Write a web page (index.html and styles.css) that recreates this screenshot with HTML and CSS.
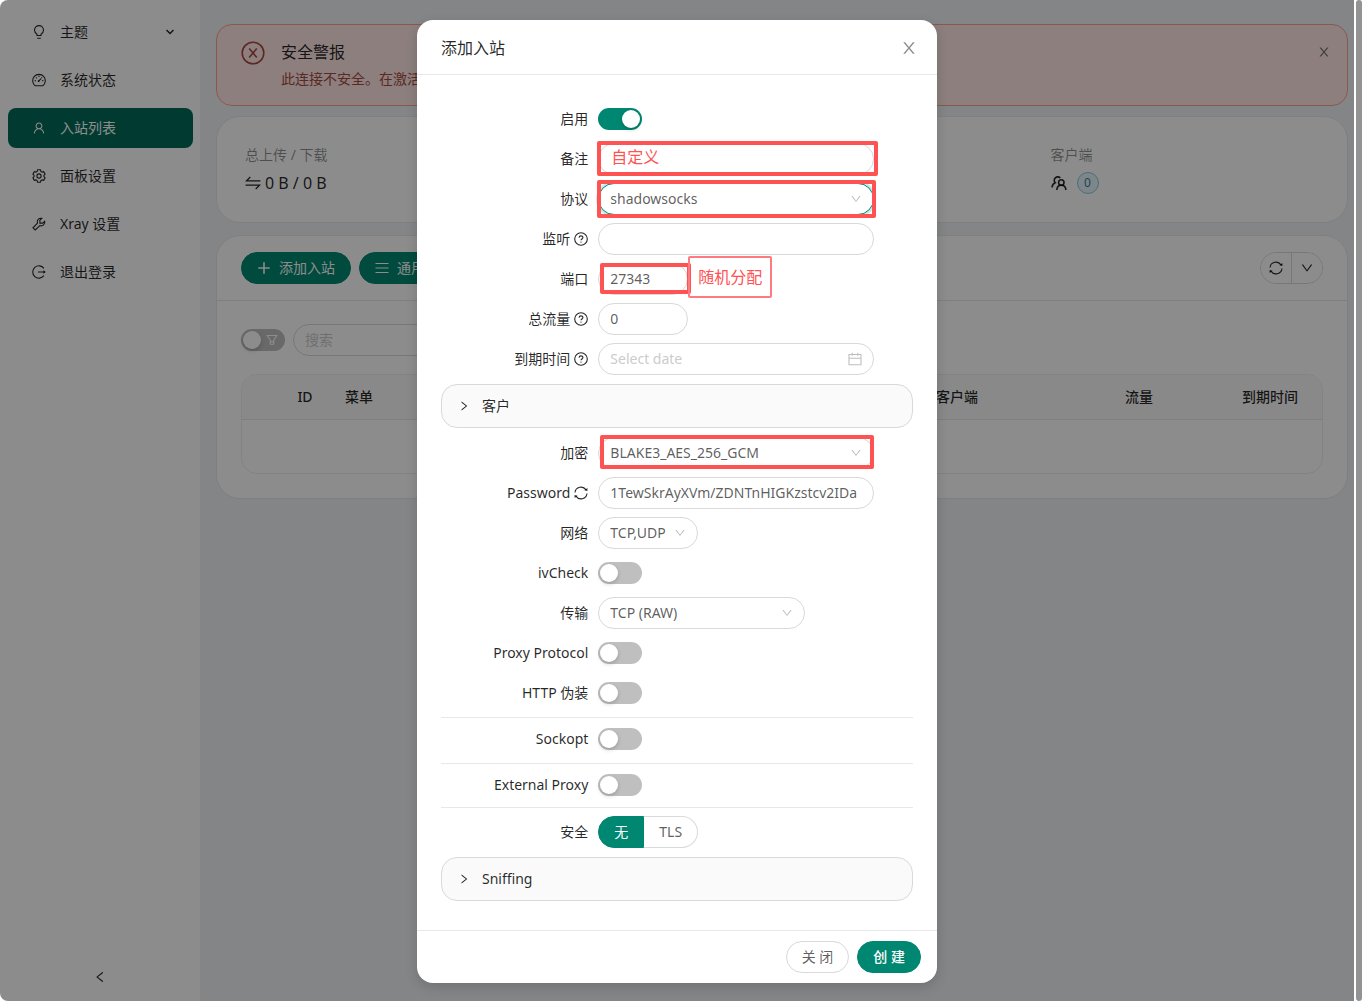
FILE: index.html
```html
<!DOCTYPE html>
<html lang="zh-CN">
<head>
    <meta charset="UTF-8">
    <meta name="viewport" content="width=device-width, initial-scale=1.0">
    <title>入站列表</title>
    <link rel="stylesheet" href="styles.css">
</head>
<body>
    <svg class="sprite" aria-hidden="true">
        <symbol id="i-close" viewBox="0 0 1024 1024"><path d="M563.8 512l262.5-312.9c4.4-5.2.7-13.1-6.1-13.1h-79.8c-4.7 0-9.2 2.1-12.3 5.7L511.6 449.8 295.1 191.7c-3-3.6-7.5-5.7-12.3-5.7H203c-6.8 0-10.5 7.9-6.1 13.1L459.4 512 196.9 824.9A7.95 7.95 0 0 0 203 838h79.8c4.7 0 9.2-2.1 12.3-5.7l216.5-258.1 216.5 258.1c3 3.6 7.5 5.7 12.3 5.7h79.8c6.8 0 10.5-7.9 6.1-13.1L563.8 512z"/></symbol>
        <symbol id="i-down" viewBox="0 0 1024 1024"><path d="M884 256h-75c-5.1 0-9.9 2.5-12.9 6.6L512 654.2 227.9 262.6c-3-4.1-7.8-6.6-12.9-6.6h-75c-6.5 0-10.3 7.4-6.5 12.7l352.6 486.1c12.8 17.6 39 17.6 51.7 0l352.6-486.1c3.9-5.3.1-12.7-6.4-12.7z"/></symbol>
        <symbol id="i-right" viewBox="0 0 1024 1024"><path d="M765.7 486.8L314.9 134.7A7.97 7.97 0 0 0 302 141v77.3c0 4.9 2.3 9.6 6.1 12.6l360 281.1-360 281.1c-3.9 3-6.1 7.7-6.1 12.6V883c0 6.7 7.7 10.4 12.9 6.3l450.8-352.1a31.96 31.96 0 0 0 0-50.4z"/></symbol>
        <symbol id="i-user" viewBox="0 0 1024 1024"><path d="M858.5 763.6a374 374 0 0 0-80.6-119.5 375.63 375.63 0 0 0-119.5-80.6c-.4-.2-.8-.3-1.2-.5C719.5 518 760 444.7 760 362c0-137-111-248-248-248S264 225 264 362c0 82.7 40.5 156 102.8 201.1-.4.2-.8.3-1.2.5-44.8 18.9-85 46-119.5 80.6a375.63 375.63 0 0 0-80.6 119.5A371.7 371.7 0 0 0 136 901.8a8 8 0 0 0 8 8.2h60c4.4 0 7.9-3.5 8-7.8 2-77.2 33-149.5 87.8-204.3 56.7-56.7 132-87.9 212.2-87.9s155.5 31.2 212.2 87.9C779 752.7 810 825 812 902.2c.1 4.4 3.6 7.8 8 7.8h60a8 8 0 0 0 8-8.2c-1-47.8-10.9-94.3-29.5-138.2zM512 534c-45.9 0-89.1-17.9-121.6-50.4S340 407.9 340 362c0-45.9 17.9-89.1 50.4-121.6S466.1 190 512 190s89.1 17.9 121.6 50.4S684 316.1 684 362c0 45.9-17.9 89.1-50.4 121.6S557.9 534 512 534z"/></symbol>
        <symbol id="i-bulb" viewBox="0 0 14 14"><path class="ln" d="M5 10.5V9.200C3.600 8.400 2.500 7 2.500 5.100a4.500 4.500 0 0 1 9 0c0 1.900-1.100 3.300-2.500 4.100v1.300zM5.200 13.200h3.600"/></symbol>
        <symbol id="i-dashboard" viewBox="0 0 14 14"><path class="ln" d="M3.200 12.700A6.300 6.300 0 1 1 10.800 12.700zM6.600 8.200l2.500-2.600M7 2.800v1.200M2.700 7.600h1.200M10.200 7.600h1.200M4 4.500l.8.8M10 4.500l-.6.6"/><circle cx="6.600" cy="8.200" r=".9"/></symbol>
        <symbol id="i-setting" viewBox="0 0 14 14"><path class="ln" d="M5.600.8h2.800l.5 1.700 1.100.6 1.700-.4 1.400 2.400-1.200 1.300v1.200l1.200 1.300-1.400 2.400-1.700-.4-1.100.6-.5 1.700H5.600l-.5-1.700-1.100-.6-1.700.4L.9 8.900l1.200-1.300V6.400L.9 5.100l1.400-2.400 1.700.4 1.100-.6z"/><circle class="ln" cx="7" cy="7" r="2.100"/></symbol>
        <symbol id="i-tool" viewBox="0 0 14 14"><path class="ln" d="M9.800 1.300 7.900 3.200v2.900h2.900l1.900-1.900a3.700 3.700 0 0 1-4.800 4.400L3.200 13 1 10.800l4.500-4.600a3.700 3.700 0 0 1 4.300-4.900z"/></symbol>
        <symbol id="i-logout" viewBox="0 0 14 14"><path class="ln" d="M11.900 3.300a6.200 6.200 0 1 0 0 7.400M6 7h6.500"/><path d="M11.400 5.200v3.600L13.800 7z"/></symbol>
        <symbol id="i-error" viewBox="0 0 24 24"><path class="ln2" d="M12 1.200a10.800 10.800 0 1 0 0 21.600 10.800 10.800 0 0 0 0-21.600zM8.200 7.500l7.600 9M15.800 7.500l-7.600 9"/></symbol>
        <symbol id="i-swap" viewBox="0 0 14 14"><path class="ln" d="M13.500 5.200H1.200l3.400-3.400M.5 8.800h12.300l-3.400 3.400"/></symbol>
        <symbol id="i-team" viewBox="0 0 16 16"><path class="ln2" d="M1 12.500c.2-2.300 1.400-4 3.200-4.700A3.100 3.100 0 1 1 9.300 3M5.800 15c.2-3 2-4.700 4.500-4.700s4.400 1.700 4.600 4.700"/><circle class="ln2" cx="10.300" cy="7.500" r="2.700"/></symbol>
        <symbol id="i-plus" viewBox="0 0 14 14"><path class="ln2" d="M7 1.300v11.400M1.300 7h11.400"/></symbol>
        <symbol id="i-menu" viewBox="0 0 14 14"><path class="ln" d="M.5 2.500h13M.5 7h13M.5 11.500h13"/></symbol>
        <symbol id="i-filter" viewBox="0 0 12 12"><path class="ln" d="M1.200 1.500h9.600L7.700 6.300v4H4.300v-4zM4.300 7.700h3.400"/></symbol>
        <symbol id="i-sync" viewBox="0 0 14 14"><path class="ln" d="M1 6.500a6 6 0 0 1 11-2.600M13 7.500a6 6 0 0 1-11 2.600"/><path d="M13.400 1.900v3l-3-.6zM.6 12.100v-3l3 .6z"/></symbol>
        <symbol id="i-question" viewBox="0 0 14 14"><circle class="ln" cx="7" cy="7" r="6.300"/><path class="ln" d="M5.100 5.700c0-2.500 3.800-2.400 3.800-.1 0 1.300-1.900 1.500-1.900 2.700"/><circle cx="7" cy="10.100" r=".7"/></symbol>
        <symbol id="i-calendar" viewBox="0 0 14 14"><path class="ln" d="M1 2.500h12v10.200H1zM1 6.200h12M4.200.8v3M9.800.8v3"/></symbol>
    </svg>

    <div class="window">
        <div class="app">
            <aside class="sidebar">
                <nav class="menu">
                    <a href="#"><svg class="icon"><use href="#i-bulb"/></svg>主题<svg class="icon caret" viewBox="0 0 10 10"><path d="M1.500 3 5 6.500 8.500 3" fill="none" stroke="currentColor" stroke-width="1.500"/></svg></a>
                    <a href="#"><svg class="icon"><use href="#i-dashboard"/></svg>系统状态</a>
                    <a href="#" class="active"><svg class="icon"><use href="#i-user"/></svg>入站列表</a>
                    <a href="#"><svg class="icon"><use href="#i-setting"/></svg>面板设置</a>
                    <a href="#"><svg class="icon"><use href="#i-tool"/></svg>Xray 设置</a>
                    <a href="#"><svg class="icon"><use href="#i-logout"/></svg>退出登录</a>
                </nav>
                <button class="collapse-menu" type="button" aria-label="收起菜单"><svg class="icon flip"><use href="#i-right"/></svg></button>
            </aside>

            <main class="content">
                <div class="alert">
                    <svg class="alert-icon"><use href="#i-error"/></svg>
                    <div class="alert-text">
                        <h2>安全警报</h2>
                        <p>此连接不安全。在激活</p>
                    </div>
                    <button class="plain" type="button" aria-label="关闭警报"><svg class="icon"><use href="#i-close"/></svg></button>
                </div>

                <section class="card stats">
                    <div class="stat">
                        <div class="stat-title">总上传 / 下载</div>
                        <div class="stat-value"><svg class="icon large"><use href="#i-swap"/></svg>0 B / 0 B</div>
                    </div>
                    <div class="stat last">
                        <div class="stat-title">客户端</div>
                        <div class="stat-value"><svg class="icon large"><use href="#i-team"/></svg><span class="tag">0</span></div>
                    </div>
                </section>

                <section class="card">
                    <div class="toolbar">
                        <button class="btn primary" type="button"><svg class="icon"><use href="#i-plus"/></svg>添加入站</button>
                        <button class="btn primary" type="button"><svg class="icon"><use href="#i-menu"/></svg>通用操作</button>
                        <div class="btn-group">
                            <button type="button" aria-label="刷新"><svg class="icon"><use href="#i-sync"/></svg></button>
                            <button type="button" aria-label="更多"><svg class="icon"><use href="#i-down"/></svg></button>
                        </div>
                    </div>
                    <div class="card-body">
                        <div class="filters">
                            <label class="filter-switch">
                                <input type="checkbox" class="switch" aria-label="筛选">
                                <svg><use href="#i-filter"/></svg>
                            </label>
                            <input type="text" class="field search" placeholder="搜索" aria-label="搜索">
                        </div>
                        <div class="table-box">
                            <table>
                                <thead>
                                    <tr>
                                        <th class="c-expand"></th>
                                        <th class="c-id">ID</th>
                                        <th class="c-menu">菜单</th>
                                        <th></th>
                                        <th class="c-client">客户端</th>
                                        <th class="c-traffic">流量</th>
                                        <th class="c-expiry">到期时间</th>
                                    </tr>
                                </thead>
                                <tbody>
                                    <tr><td colspan="7"></td></tr>
                                </tbody>
                            </table>
                        </div>
                    </div>
                </section>
            </main>

            <div class="mask">
                <form class="modal" role="dialog" aria-labelledby="modal-title">
                    <header class="modal-header">
                        <h1 id="modal-title">添加入站</h1>
                        <button class="plain" type="button" aria-label="关闭"><svg class="icon"><use href="#i-close"/></svg></button>
                    </header>

                    <div class="modal-body">
                        <div class="row">
                            <label for="enable">启用</label>
                            <div class="control"><input type="checkbox" class="switch" id="enable" checked></div>
                        </div>
                        <div class="row">
                            <label for="remark">备注</label>
                            <div class="control">
                                <input type="text" class="field" id="remark">
                                <span class="mark mark-remark">自定义</span>
                            </div>
                        </div>
                        <div class="row">
                            <label for="protocol">协议</label>
                            <div class="control">
                                <select class="field focused" id="protocol"><option>shadowsocks</option></select>
                                <svg class="suffix"><use href="#i-down"/></svg>
                                <span class="mark mark-protocol"></span>
                            </div>
                        </div>
                        <div class="row">
                            <label for="listen">监听 <svg class="icon"><use href="#i-question"/></svg></label>
                            <div class="control"><input type="text" class="field" id="listen"></div>
                        </div>
                        <div class="row">
                            <label for="port">端口</label>
                            <div class="control short">
                                <input type="text" class="field" id="port" value="27343">
                                <span class="mark mark-port"></span>
                                <span class="mark-note">随机分配</span>
                            </div>
                        </div>
                        <div class="row">
                            <label for="total">总流量 <svg class="icon"><use href="#i-question"/></svg></label>
                            <div class="control short"><input type="text" class="field" id="total" value="0"></div>
                        </div>
                        <div class="row">
                            <label for="expiry">到期时间 <svg class="icon"><use href="#i-question"/></svg></label>
                            <div class="control">
                                <input type="text" class="field" id="expiry" placeholder="Select date">
                                <svg class="suffix calendar"><use href="#i-calendar"/></svg>
                            </div>
                        </div>

                        <button class="panel" type="button"><svg class="icon small"><use href="#i-right"/></svg>客户</button>

                        <div class="row">
                            <label for="method">加密</label>
                            <div class="control">
                                <select class="field" id="method"><option>BLAKE3_AES_256_GCM</option></select>
                                <svg class="suffix"><use href="#i-down"/></svg>
                                <span class="mark mark-method"></span>
                            </div>
                        </div>
                        <div class="row">
                            <label for="password">Password <svg class="icon"><use href="#i-sync"/></svg></label>
                            <div class="control"><input type="text" class="field" id="password" value="1TewSkrAyXVm/ZDNTnHIGKzstcv2IDa"></div>
                        </div>
                        <div class="row">
                            <label for="network">网络</label>
                            <div class="control network">
                                <select class="field" id="network"><option>TCP,UDP</option></select>
                                <svg class="suffix"><use href="#i-down"/></svg>
                            </div>
                        </div>
                        <div class="row">
                            <label for="ivcheck">ivCheck</label>
                            <div class="control"><input type="checkbox" class="switch" id="ivcheck"></div>
                        </div>
                        <div class="row">
                            <label for="transport">传输</label>
                            <div class="control transport">
                                <select class="field" id="transport"><option>TCP (RAW)</option></select>
                                <svg class="suffix"><use href="#i-down"/></svg>
                            </div>
                        </div>
                        <div class="row">
                            <label for="proxy-protocol">Proxy Protocol</label>
                            <div class="control"><input type="checkbox" class="switch" id="proxy-protocol"></div>
                        </div>
                        <div class="row">
                            <label for="http-mask">HTTP 伪装</label>
                            <div class="control"><input type="checkbox" class="switch" id="http-mask"></div>
                        </div>

                        <div class="row divided sockopt">
                            <label for="sockopt">Sockopt</label>
                            <div class="control"><input type="checkbox" class="switch" id="sockopt"></div>
                        </div>
                        <div class="row divided">
                            <label for="external-proxy">External Proxy</label>
                            <div class="control"><input type="checkbox" class="switch" id="external-proxy"></div>
                        </div>
                        <div class="row divided security">
                            <span class="row-label" id="security-label">安全</span>
                            <div class="radio-group" role="radiogroup" aria-labelledby="security-label">
                                <label><input type="radio" name="security" checked><span>无</span></label>
                                <label><input type="radio" name="security"><span>TLS</span></label>
                            </div>
                        </div>

                        <button class="panel" type="button"><svg class="icon small"><use href="#i-right"/></svg>Sniffing</button>
                    </div>

                    <footer class="modal-footer">
                        <button class="btn" type="button">关 闭</button>
                        <button class="btn primary strong" type="submit">创 建</button>
                    </footer>
                </form>
            </div>
        </div>
        <div class="scrollbar"></div>
    </div>
</body>
</html>
```
FILE: styles.css
```css
:root {
    --primary: #008771;
    --border: #d9d9d9;
    --split: #e8e8e8;
    --text: rgba(0, 0, 0, 0.85);
    --text-light: rgba(0, 0, 0, 0.65);
    --mark: #ff5252;
}

* {
    box-sizing: border-box;
    margin: 0;
    padding: 0;
}

body {
    background: white;
    color: var(--text-light);
    font-family: "Noto Sans", "Noto Sans CJK SC", sans-serif;
    font-size: 14px;
    line-height: 22px;
}

button,
input,
select {
    font: inherit;
    color: inherit;
}

button {
    cursor: pointer;
}

.sprite {
    position: absolute;
    width: 0;
    height: 0;
}

.ln,
.ln2 {
    fill: none;
    stroke: currentColor;
    stroke-width: 1.1;
}

.ln2 {
    stroke-width: 1.6;
}

.icon {
    width: 14px;
    height: 14px;
    flex: none;
    fill: currentColor;
}

.icon.small {
    width: 12px;
    height: 12px;
}

.icon.large {
    width: 16px;
    height: 16px;
}

.flip {
    transform: scaleX(-1);
}

.plain {
    display: flex;
    border: none;
    background: none;
    color: rgba(0, 0, 0, 0.45);
}

.window {
    display: flex;
    min-height: 100vh;
}

.app {
    position: relative;
    display: flex;
    flex: 1;
    min-width: 0;
    overflow: hidden;
    border-radius: 8px 0 0 8px;
    background: #f0f2f5;
}

.scrollbar {
    width: 6px;
    margin: 0 2px;
    border-radius: 3px;
    background: #939393;
}

/* Sidebar */
.sidebar {
    display: flex;
    flex-direction: column;
    justify-content: space-between;
    width: 200px;
    flex: none;
    background: white;
}

.menu {
    display: flex;
    flex-direction: column;
    gap: 8px;
    padding: 12px 7px 12px 8px;
}

.menu a {
    display: flex;
    align-items: center;
    gap: 14px;
    height: 40px;
    padding: 0 18px 0 24px;
    border-radius: 8px;
    color: var(--text);
    text-decoration: none;
}

.menu .active {
    background: #006b58;
    color: white;
}

.menu .caret {
    width: 10px;
    height: 10px;
    margin-left: auto;
}

.collapse-menu {
    display: flex;
    align-items: center;
    justify-content: center;
    height: 48px;
    border: none;
    background: none;
    color: var(--text);
}

/* Content */
.content {
    flex: 1;
    min-width: 0;
    padding: 24px 6px 24px 16px;
}

.alert {
    display: flex;
    align-items: flex-start;
    gap: 16px;
    height: 82px;
    margin-bottom: 10px;
    padding: 15px 16px 16px 24px;
    border: 1px solid #ffa08c;
    border-radius: 16px;
    background: #ffe8e6;
    color: #a84a40;
}

.alert-icon {
    width: 24px;
    height: 26px;
    flex: none;
}

.alert-text {
    flex: 1;
}

.alert h2 {
    color: var(--text);
    font-size: 16px;
    font-weight: 400;
    line-height: 24px;
}

.alert p {
    padding-top: 4px;
}

.alert .plain {
    padding-top: 5px;
    color: rgba(0, 0, 0, 0.55);
}

.card {
    margin-bottom: 12px;
    border: 1px solid var(--split);
    border-radius: 24px;
    background: white;
}

.stats {
    display: grid;
    grid-template-columns: repeat(4, 1fr);
    padding: 27px 28px 25px;
}

.stats .last {
    grid-column: 4;
}

.stat-title {
    margin-bottom: 3px;
    color: rgba(0, 0, 0, 0.45);
}

.stat-value {
    display: flex;
    align-items: center;
    gap: 4px;
    height: 28px;
    color: var(--text);
    font-size: 16px;
}

.tag {
    min-width: 22px;
    margin-left: 6px;
    border: 1px solid #87c9e0;
    border-radius: 11px;
    background: #e8f5fa;
    color: #2d7fa0;
    font-size: 12px;
    line-height: 20px;
    text-align: center;
}

.toolbar {
    display: flex;
    gap: 8px;
    padding: 16px 24px;
    border-bottom: 1px solid var(--split);
}

.btn {
    display: flex;
    align-items: center;
    gap: 8px;
    height: 32px;
    padding: 0 15px;
    border: 1px solid var(--border);
    border-radius: 16px;
    background: white;
}

.primary {
    border-color: var(--primary);
    background: var(--primary);
    color: white;
}

.btn-group {
    display: flex;
    margin-left: auto;
    overflow: hidden;
    border: 1px solid var(--border);
    border-radius: 16px;
}

.btn-group button {
    display: flex;
    align-items: center;
    justify-content: center;
    width: 30px;
    border: none;
    background: white;
    color: var(--text);
}

.btn-group button + button {
    width: 31px;
    border-left: 1px solid var(--border);
}

.card-body {
    padding: 23px 24px 24px;
}

.filters {
    display: flex;
    align-items: center;
    gap: 8px;
    margin-bottom: 18px;
}

.filter-switch {
    display: flex;
    position: relative;
}

.filter-switch svg {
    position: absolute;
    top: 5px;
    right: 7px;
    width: 12px;
    height: 12px;
    color: white;
}

.filters .search {
    width: 300px;
}

.table-box {
    overflow: hidden;
    border: 1px solid #eeeeee;
    border-radius: 16px;
}

table {
    width: 100%;
    border-collapse: collapse;
    table-layout: fixed;
}

th {
    height: 44px;
    border-bottom: 1px solid var(--split);
    background: #fafafa;
    color: var(--text);
    font-weight: 500;
    text-align: center;
}

td {
    height: 54px;
}

.c-expand {
    width: 36px;
}

.c-id,
.c-menu {
    width: 54px;
}

.c-client {
    width: 206px;
}

.c-traffic {
    width: 158px;
}

.c-expiry {
    width: 104px;
}

/* Form controls */
.field {
    display: block;
    width: 100%;
    height: 32px;
    padding: 0 11px;
    appearance: none;
    border: 1px solid var(--border);
    border-radius: 16px;
    outline: none;
    background: white;
}

input.field {
    padding-bottom: 2px;
}

.field::placeholder {
    color: #cccccc;
}

.field.focused {
    border-color: var(--primary);
    box-shadow: 0 0 0 2px rgba(0, 135, 113, 0.2);
}

.switch {
    position: relative;
    display: block;
    width: 44px;
    height: 22px;
    appearance: none;
    border-radius: 11px;
    background: #bfbfbf;
    cursor: pointer;
}

.switch::before {
    content: '';
    position: absolute;
    top: 2px;
    left: 2px;
    width: 18px;
    height: 18px;
    border-radius: 50%;
    background: white;
    box-shadow: 0 2px 4px rgba(0, 35, 11, 0.2);
}

.switch:checked {
    background: var(--primary);
}

.switch:checked::before {
    left: 24px;
}

/* Modal */
.mask {
    position: absolute;
    inset: 0;
    padding: 20px 0;
    background: rgba(0, 0, 0, 0.45);
}

.modal {
    width: 520px;
    max-width: 100%;
    margin: 0 auto;
    border-radius: 16px;
    background: white;
    box-shadow: 0 4px 12px rgba(0, 0, 0, 0.15);
}

.modal-header {
    display: flex;
    align-items: center;
    justify-content: space-between;
    padding: 17px 20px 15px 24px;
    border-bottom: 1px solid var(--split);
}

.modal-header h1 {
    color: var(--text);
    font-size: 16px;
    font-weight: 400;
}

.modal-header .icon {
    width: 18px;
    height: 18px;
    margin-right: -1px;
}

.modal-body {
    padding: 24px;
}

.row {
    display: grid;
    grid-template-columns: 4fr 7fr 1fr;
    align-items: center;
    height: 40px;
}

.row > label,
.row-label {
    display: flex;
    align-items: center;
    justify-content: flex-end;
    gap: 4px;
    padding-right: 10px;
    color: var(--text);
    white-space: nowrap;
}

.control {
    position: relative;
}

.short {
    width: 90px;
}

.network {
    width: 100px;
}

.transport {
    width: 75%;
}

.suffix {
    position: absolute;
    top: 10px;
    right: 12px;
    width: 12px;
    height: 12px;
    fill: #bfbfbf;
    pointer-events: none;
}

.calendar {
    top: 9px;
    width: 14px;
    height: 14px;
    color: #bfbfbf;
}

.divided {
    height: 44px;
    padding-bottom: 1px;
    border-top: 1px solid var(--split);
}

.divided.sockopt {
    height: 46px;
    margin-top: 4px;
    padding-bottom: 3px;
}

.divided.security {
    height: 45px;
    padding: 4px 0 0;
}

.panel {
    display: flex;
    align-items: center;
    gap: 12px;
    width: 100%;
    height: 44px;
    margin: 5px 0;
    padding: 0 16px;
    border: 1px solid var(--border);
    border-radius: 16px;
    background: #fafafa;
    color: var(--text);
}

.radio-group {
    display: flex;
}

.radio-group input {
    position: absolute;
    opacity: 0;
}

.radio-group span {
    display: block;
    padding: 4px 15px;
    border: 1px solid var(--border);
}

.radio-group label:first-child span {
    border-radius: 16px 0 0 16px;
}

.radio-group label:last-child span {
    border-left: none;
    border-radius: 0 16px 16px 0;
}

.radio-group input:checked + span {
    border-color: var(--primary);
    background: var(--primary);
    color: white;
}

.modal-footer {
    display: flex;
    justify-content: flex-end;
    gap: 8px;
    padding: 10px 16px;
    border-top: 1px solid var(--split);
}

.strong {
    font-weight: 500;
}

/* Red notes laid over the form */
.mark {
    position: absolute;
    border: 4px solid var(--mark);
    border-radius: 2px;
    color: var(--mark);
    font-size: 16px;
    pointer-events: none;
}

.mark-remark {
    inset: -2px -4px -1px -1px;
    padding: 1px 10px;
}

.mark-protocol {
    inset: -3px -2px -3px -1px;
}

.mark-port {
    inset: 0 -3px 1px 2px;
}

.mark-method {
    inset: -2px 0 0 2px;
}

.mark-note {
    position: absolute;
    top: -7px;
    left: 90px;
    padding: 8px;
    border: 2px solid #ff7b80;
    border-radius: 2px;
    color: var(--mark);
    font-size: 16px;
    white-space: nowrap;
}
```
